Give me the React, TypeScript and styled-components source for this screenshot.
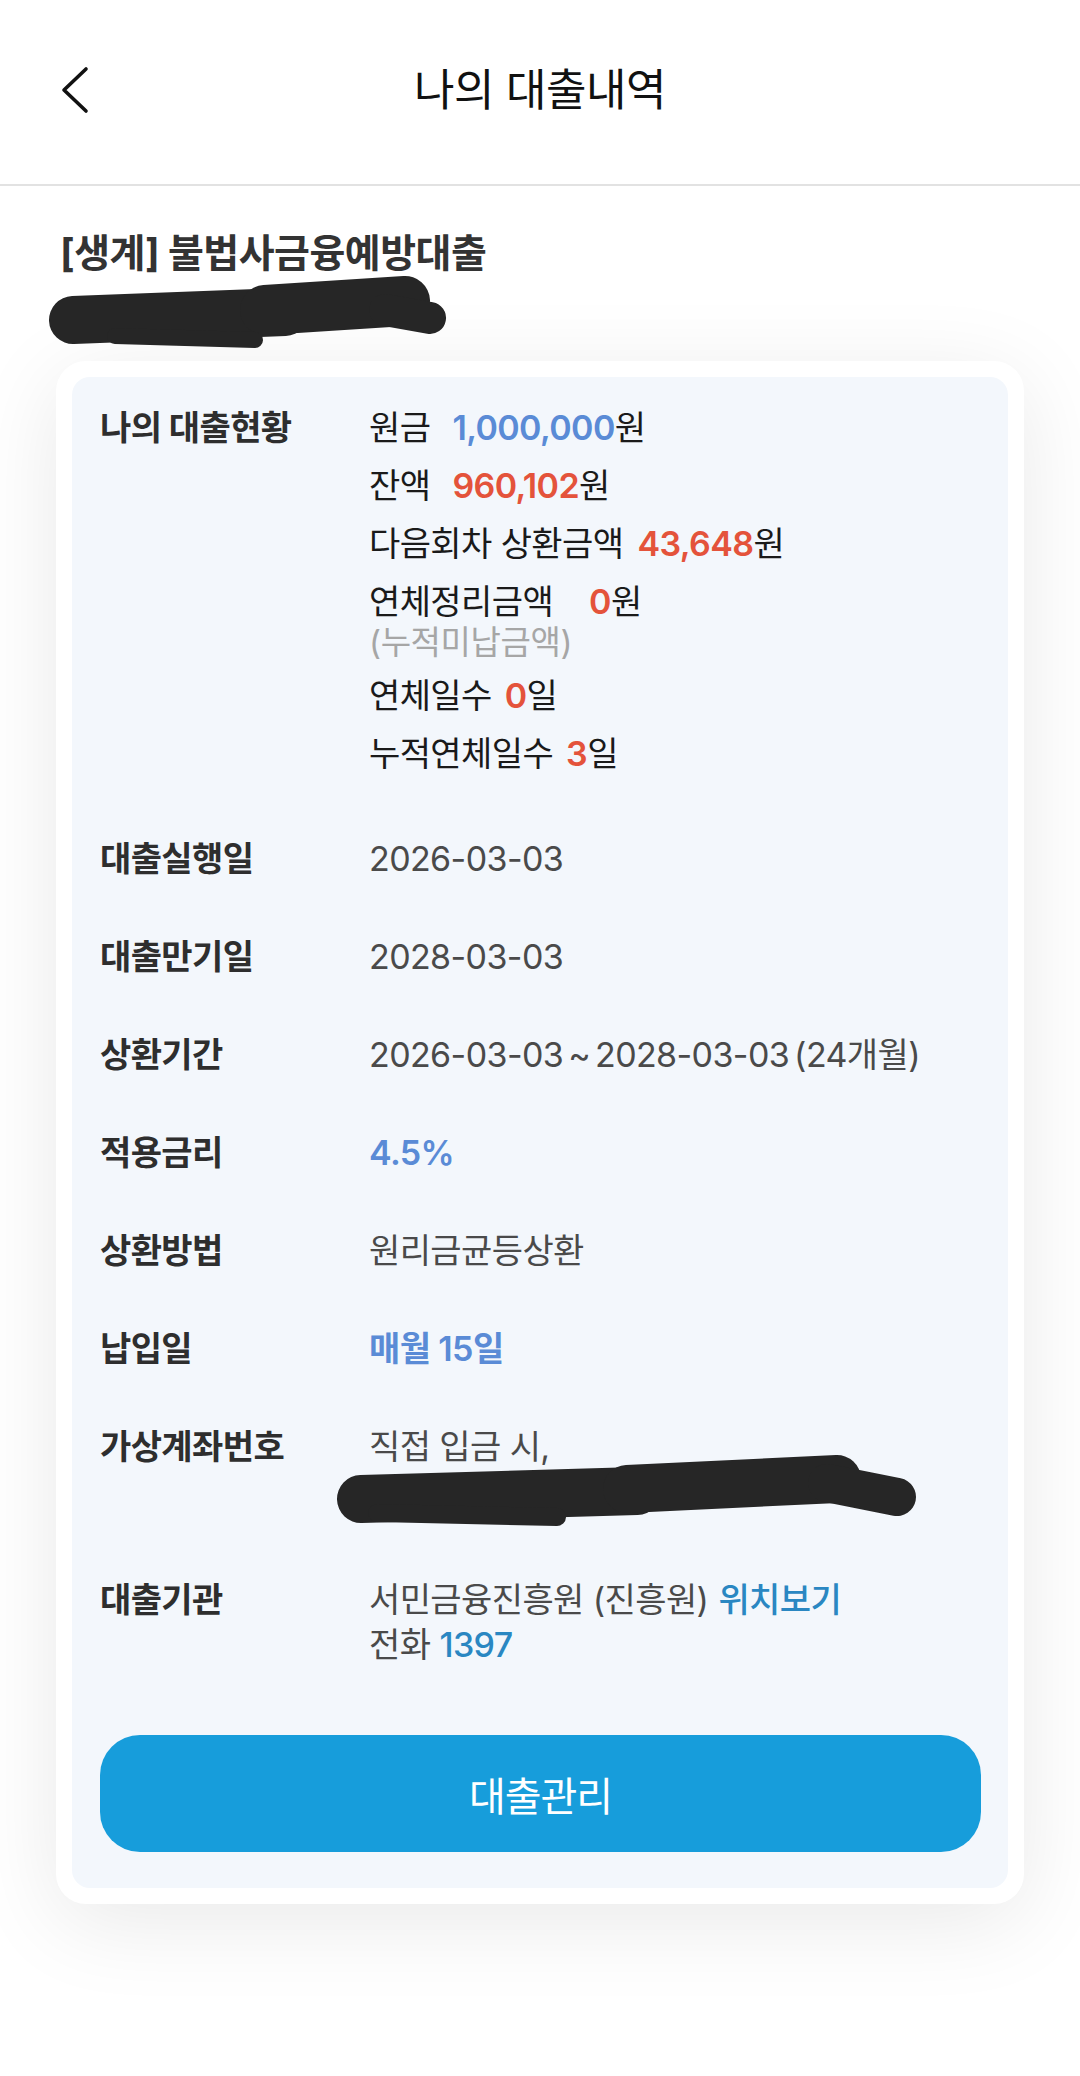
import React from 'react';
import styled, { createGlobalStyle } from 'styled-components';

// Styles

const GlobalStyle = createGlobalStyle`
    html, body {
        margin: 0;
        padding: 0;
        background: #ffffff;
    }
    body {
        font-family: Inter, "Noto Sans CJK KR", "Noto Sans", sans-serif;
        color: #1a1a1a;
        -webkit-font-smoothing: antialiased;
    }
    * {
        box-sizing: border-box;
    }
`

const Page = styled.div`
    width: 1080px;
    min-height: 2076px;
    background: #ffffff;
    overflow: hidden;
`
const TopBar = styled.header`
    display: grid;
    grid-template-columns: 1fr auto 1fr;
    align-items: center;
    height: 186px;
    padding-bottom: 5px;
    border-bottom: 2px solid #e2e2e2;
`
const BackButton = styled.button`
    justify-self: start;
    display: flex;
    align-items: center;
    margin-left: 60px;
    padding: 0;
    border: 0;
    background: none;
    width: 34px;
    height: 48px;
`
const TopTitle = styled.h1`
    margin: 0;
    font-size: 44px;
    line-height: 52px;
    font-weight: 400;
    letter-spacing: -0.5px;
    color: #111111;
`
const Content = styled.main`
    padding: 44px 56px 120px;
`
const ProductName = styled.h2`
    margin: 0 0 0 4px;
    font-size: 39px;
    line-height: 46px;
    font-weight: 700;
    letter-spacing: -0.5px;
    color: #333333;
`
const NameMask = styled.svg`
    display: block;
    width: 410px;
    height: 78px;
    margin: -4px 0 11px -11px;
`
const Card = styled.section`
    background: #ffffff;
    border-radius: 30px;
    padding: 16px;
    box-shadow: 0 18px 90px rgba(0, 0, 0, 0.09);
`
const Panel = styled.div`
    background: #f3f7fc;
    border-radius: 18px;
    padding: 28px 27px 36px 28px;
`
const InfoList = styled.dl`
    margin: 0;
    display: flex;
    flex-direction: column;
    gap: 53px;
`
const InfoRow = styled.div<{ $extra?: number }>`
    display: grid;
    grid-template-columns: 269px 1fr;
    padding-bottom: ${p => p.$extra ?? 0}px;
`
const Label = styled.dt`
    margin: 0;
    font-size: 34px;
    line-height: 45px;
    font-weight: 700;
    letter-spacing: -0.6px;
    color: #2e2e2e;
`
const Value = styled.dd<{ $gap?: number }>`
    position: relative;
    margin: 0;
    display: flex;
    flex-direction: column;
    gap: ${p => p.$gap ?? 0}px;
`
const Line = styled.div<{ $dark?: boolean; $tone?: 'blue'; $tight?: boolean }>`
    font-size: 34px;
    line-height: 45px;
    letter-spacing: -0.6px;
    word-spacing: ${p => (p.$tight ? '-4px' : 'normal')};
    white-space: nowrap;
    font-weight: ${p => (p.$tone ? 600 : 400)};
    color: ${p => (p.$tone ? '#5a8bd6' : p.$dark ? '#1a1a1a' : '#4a4a4a')};
`
const SubNote = styled.div`
    font-size: 33px;
    line-height: 36px;
    letter-spacing: -0.4px;
    color: #a6a6a6;
`
const Num = styled.span<{ $tone: 'blue' | 'red' | 'link'; $gap?: number }>`
    margin-left: ${p => p.$gap ?? 0}px;
    font-weight: ${p => (p.$tone === 'link' ? 500 : 600)};
    color: ${p => (p.$tone === 'blue' ? '#5a8bd6' : p.$tone === 'red' ? '#e4533b' : '#2a87c2')};
`
const MaskedLine = styled.div`
    position: relative;
    height: 55px;
`
const AccountMask = styled.svg`
    position: absolute;
    left: -32px;
    top: -16px;
    width: 585px;
    height: 76px;
`
const ManageButton = styled.button`
    display: block;
    width: 100%;
    height: 117px;
    margin-top: 68px;
    border: 0;
    border-radius: 40px;
    background: #179ddb;
    color: #ffffff;
    font-family: inherit;
    font-size: 40px;
    font-weight: 400;
    letter-spacing: -1px;
`

// Parts

const Scribble = ({ strokes }: { strokes: [string, number][] }) => (
    <g fill="none" stroke="#262626" strokeLinecap="round" strokeLinejoin="round">
        {strokes.map(([d, w], i) => (
            <path key={i} d={d} strokeWidth={w} />
        ))}
    </g>
)

const LoanHistory = () => {
    return (
        <Page>
            <GlobalStyle />
            <TopBar>
                <BackButton aria-label="뒤로">
                    <svg width="34" height="48" viewBox="0 0 34 48">
                        <polyline points="26,3 4,24 26,45" fill="none" stroke="#111" strokeWidth="3.6" strokeLinecap="round" strokeLinejoin="round" />
                    </svg>
                </BackButton>
                <TopTitle>나의 대출내역</TopTitle>
                <div />
            </TopBar>

            <Content>
                <ProductName>[생계] 불법사금융예방대출</ProductName>
                <NameMask viewBox="0 0 410 78">
                    <Scribble
                        strokes={[
                            ['M 28 48 L 240 40', 48],
                            ['M 220 38 L 360 29', 50],
                            ['M 340 38 L 385 46', 32],
                            ['M 70 64 L 210 68', 16],
                        ]}
                    />
                </NameMask>

                <Card>
                    <Panel>
                        <InfoList>
                            <InfoRow $extra={7}>
                                <Label>나의 대출현황</Label>
                                <Value $gap={13}>
                                    <Line $dark>원금<Num $tone="blue" $gap={22}>1,000,000</Num>원</Line>
                                    <Line $dark>잔액<Num $tone="red" $gap={22}>960,102</Num>원</Line>
                                    <Line $dark>다음회차 상환금액<Num $tone="red" $gap={14}>43,648</Num>원</Line>
                                    <div>
                                        <Line $dark>연체정리금액<Num $tone="red" $gap={36}>0</Num>원</Line>
                                        <SubNote>(누적미납금액)</SubNote>
                                    </div>
                                    <Line $dark>연체일수<Num $tone="red" $gap={13}>0</Num>일</Line>
                                    <Line $dark>누적연체일수<Num $tone="red" $gap={13}>3</Num>일</Line>
                                </Value>
                            </InfoRow>

                            <InfoRow>
                                <Label>대출실행일</Label>
                                <Value><Line>2026-03-03</Line></Value>
                            </InfoRow>
                            <InfoRow>
                                <Label>대출만기일</Label>
                                <Value><Line>2028-03-03</Line></Value>
                            </InfoRow>
                            <InfoRow>
                                <Label>상환기간</Label>
                                <Value><Line $tight>2026-03-03 ~ 2028-03-03 (24개월)</Line></Value>
                            </InfoRow>
                            <InfoRow>
                                <Label>적용금리</Label>
                                <Value><Line $tone="blue">4.5%</Line></Value>
                            </InfoRow>
                            <InfoRow>
                                <Label>상환방법</Label>
                                <Value><Line>원리금균등상환</Line></Value>
                            </InfoRow>
                            <InfoRow>
                                <Label>납입일</Label>
                                <Value><Line $tone="blue">매월 15일</Line></Value>
                            </InfoRow>
                            <InfoRow>
                                <Label>가상계좌번호</Label>
                                <Value>
                                    <Line>직접 입금 시,</Line>
                                    <MaskedLine>
                                        <AccountMask viewBox="0 0 585 76">
                                            <Scribble
                                                strokes={[
                                                    ['M 24 46 L 300 38', 48],
                                                    ['M 290 36 L 500 26', 48],
                                                    ['M 490 30 L 560 44', 38],
                                                    ['M 40 60 L 220 64', 18],
                                                ]}
                                            />
                                        </AccountMask>
                                    </MaskedLine>
                                </Value>
                            </InfoRow>
                            <InfoRow>
                                <Label>대출기관</Label>
                                <Value>
                                    <Line>서민금융진흥원 (진흥원)<Num $tone="link" $gap={10}>위치보기</Num></Line>
                                    <Line>전화<Num $tone="link" $gap={9}>1397</Num></Line>
                                </Value>
                            </InfoRow>
                        </InfoList>

                        <ManageButton>대출관리</ManageButton>
                    </Panel>
                </Card>
            </Content>
        </Page>
    );
};

export default LoanHistory;
